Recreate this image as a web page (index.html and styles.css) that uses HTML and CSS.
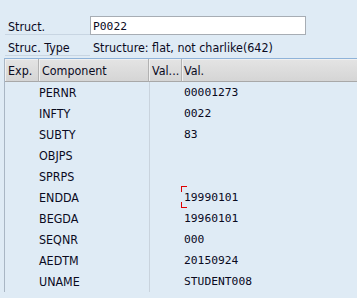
FILE: index.html
```html
<!DOCTYPE html>
<html lang="en">
<head>
    <meta charset="UTF-8">
    <title>Structure Editor</title>
    <link rel="stylesheet" href="styles.css">
</head>
<body>
    <div class="form">
        <div class="fieldRow">
            <span class="fieldLabel">Struct.</span>
            <div class="inputBox">P0022</div>
        </div>
        <div class="fieldRow">
            <span class="fieldLabel">Struc. Type</span>
            <span class="fieldValue">Structure: flat, not charlike(642)</span>
        </div>
    </div>

    <div class="grid">
        <div class="head">Exp.</div>
        <div class="head">Component</div>
        <div class="head">Val...</div>
        <div class="head last">Val.</div>

        <div class="cell"></div><div class="cell name">PERNR</div><div class="cell sep"></div><div class="cell value">00001273</div>
        <div class="cell"></div><div class="cell name">INFTY</div><div class="cell sep"></div><div class="cell value">0022</div>
        <div class="cell"></div><div class="cell name">SUBTY</div><div class="cell sep"></div><div class="cell value">83</div>
        <div class="cell"></div><div class="cell name">OBJPS</div><div class="cell sep"></div><div class="cell value"></div>
        <div class="cell"></div><div class="cell name">SPRPS</div><div class="cell sep"></div><div class="cell value"></div>
        <div class="cell"></div><div class="cell name">ENDDA</div><div class="cell sep"></div><div class="cell value focused">19990101</div>
        <div class="cell"></div><div class="cell name">BEGDA</div><div class="cell sep"></div><div class="cell value">19960101</div>
        <div class="cell"></div><div class="cell name">SEQNR</div><div class="cell sep"></div><div class="cell value">000</div>
        <div class="cell"></div><div class="cell name">AEDTM</div><div class="cell sep"></div><div class="cell value">20150924</div>
        <div class="cell"></div><div class="cell name">UNAME</div><div class="cell sep"></div><div class="cell value">STUDENT008</div>
    </div>
</body>
</html>
```

FILE: styles.css
```css
body {
    margin: 0;
    background-color: #dfebf5;
    font-family: 'DejaVu Sans Condensed', 'DejaVu Sans', sans-serif;
    font-size: 12.4px;
    color: #0a0a1e;
    overflow: hidden;
}

.form {
    padding: 16px 0 0 5px;
}

.fieldRow {
    display: flex;
    height: 21px;
}

.fieldLabel {
    width: 82px;
    height: 16px;
    padding: 2px 0 0 3px;
    line-height: 17px;
    border-bottom: 1px solid #c8d5e2;
}

.inputBox {
    width: 212px;
    height: 17px;
    padding-left: 2px;
    background: #fff;
    border: 1px solid #a7adb4;
    font-family: 'DejaVu Sans Mono', monospace;
    font-size: 11.3px;
    line-height: 19px;
}

.fieldValue {
    padding: 2px 0 0 3px;
    line-height: 17px;
}

.grid {
    display: grid;
    grid-template-columns: 34px 110px 33px 1fr;
    margin-left: 4px;
    border-left: 1px solid #a9b6c4;
    border-top: 1px solid #8fb3d9;
}

.head {
    height: 22px;
    line-height: 23px;
    padding-left: 3px;
    background: linear-gradient(#e4e4e4, #d5d5d5);
    border-bottom: 1px solid #a8a8a8;
    border-right: 1px solid #b2b2b2;
    box-shadow: inset 1px 1px 0 #f0f0f0;
}

.head.last {
    border-right: none;
    padding-left: 2px;
}

.cell {
    height: 21px;
    line-height: 22px;
}

.sep {
    border-left: 1px solid #c9d3dd;
}

.value {
    position: relative;
    padding-left: 1px;
    border-left: 1px solid transparent;
    font-family: 'DejaVu Sans Mono', monospace;
    font-size: 11.3px;
}

.focused::before,
.focused::after {
    content: '';
    position: absolute;
    left: -2px;
    width: 5px;
    height: 5px;
    border-left: 1px solid #e00000;
}

.focused::before {
    top: -1px;
    border-top: 1px solid #e00000;
}

.focused::after {
    bottom: 0;
    border-bottom: 1px solid #e00000;
}
```
